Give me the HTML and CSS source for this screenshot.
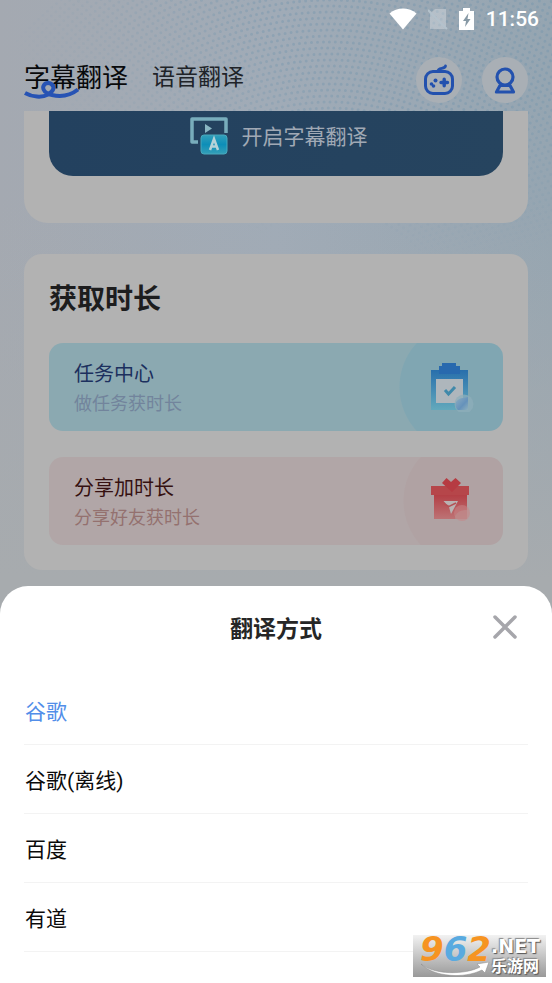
FILE: index.html
```html
<!DOCTYPE html>
<html lang="zh-CN">
<head>
<meta charset="utf-8">
<meta name="viewport" content="width=device-width, initial-scale=1">
<title>字幕翻译</title>
<link rel="stylesheet" href="styles.css">
</head>
<body>
<div class="app">
  <svg class="dots" width="552" height="260" viewBox="0 0 552 260" fill="none" stroke="#6e93ac" stroke-width="3" stroke-linecap="round" stroke-dasharray="0 6" aria-hidden="true"></svg>
  <div class="statusbar">
    <svg width="28" height="22" viewBox="0 0 28 22" aria-hidden="true"><path d="M0.500 5.500C8-1.300 20-1.300 27.500 5.500L14 21.500Z" fill="#fff"/></svg>
    <svg width="20" height="22" viewBox="0 0 20 22" aria-hidden="true"><path d="M7 1H18V21H2V6Z" fill="#fff" opacity=".28"/><path d="M0 2L19 21" stroke="#b4c2cc" stroke-width="2"/></svg>
    <svg width="16" height="24" viewBox="0 0 16 24" aria-hidden="true"><path d="M4 1H11V4H15V23H0V4H4Z" fill="#fff"/><path d="M9.500 6L4 14H7L6 20L11.500 12H8.500Z" fill="#8799a5"/></svg>
    <time>11:56</time>
  </div>
  <header class="header">
    <nav class="tabs">
      <a class="tab tab-active" href="#subtitle">字幕翻译
        <svg class="squiggle" width="56" height="20" viewBox="0 0 56 20" fill="none" aria-hidden="true"><path d="M1 13C8 17 18 18 24 14.500C28 12 30.500 9 29 6C27 2 21 2 19.500 6C18 10 22 14 28 15C37 17 47 15 54 9.500" stroke="#2753b4" stroke-width="4"/></svg>
      </a>
      <a class="tab" href="#voice">语音翻译</a>
    </nav>
    <div class="actions">
      <button class="round" aria-label="游戏">
        <svg width="34" height="34" viewBox="0 0 34 34" fill="none" stroke="#2351ae" stroke-width="3" stroke-linecap="round" aria-hidden="true"><rect x="3.500" y="8.500" width="27" height="22" rx="7.500"/><path d="M16 8C16 4 23 6.500 23.500 3" stroke-width="2.800"/><path d="M19 19.500H25.500M22.200 16.300V22.700" stroke-width="3.400"/><g fill="#2351ae" stroke="none"><circle cx="13.500" cy="17.500" r="2"/><circle cx="9.500" cy="21" r="1.800"/><circle cx="11.500" cy="23" r="1.800"/></g></svg>
      </button>
      <button class="round" aria-label="我的">
        <svg width="34" height="34" viewBox="0 0 34 34" fill="none" stroke="#2351ae" stroke-width="3.200" stroke-linejoin="round" aria-hidden="true"><circle cx="17" cy="14" r="8"/><path d="M12 22.500L8.500 29H25.500L22 22.500Z"/></svg>
      </button>
    </div>
  </header>
  <main class="content">
    <section class="card card-start">
      <button class="start">
        <svg width="40" height="40" viewBox="0 0 40 40" aria-hidden="true"><defs><linearGradient id="ga" x1="0" x2="0" y1="0" y2="1"><stop stop-color="#329fba"/><stop offset=".5" stop-color="#0d8eb8"/><stop offset="1" stop-color="#359fb7"/></linearGradient></defs><path d="M9 27H3V4H37V18" fill="none" stroke="#78adbc" stroke-width="3.500" stroke-linejoin="round"/><path d="M16 9L23 13.500L16 18Z" fill="#8ab6c3"/><rect x="12" y="20" width="26" height="19" rx="3" fill="url(#ga)" stroke="#48a8bd"/><path d="M21 35L25 24L29 35M22.500 31.500H27.500" fill="none" stroke="#b5d2d8" stroke-width="2.500"/></svg>
        <span>开启字幕翻译</span>
      </button>
    </section>
    <section class="card card-time">
      <h2>获取时长</h2>
      <a class="entry entry-task" href="#task">
        <span class="entry-text"><span class="entry-title">任务中心</span><span class="entry-sub">做任务获时长</span></span>
        <svg width="46" height="50" viewBox="0 0 46 50" aria-hidden="true"><defs><linearGradient id="gb" x1="0" x2="0" y1="0" y2="1"><stop stop-color="#286fac"/><stop offset="1" stop-color="#63a9bc"/></linearGradient><linearGradient id="gc" x1="0" y1="0" x2="1" y2="1"><stop stop-color="#8fadc1"/><stop offset=".6" stop-color="#6592bb"/><stop offset="1" stop-color="#8eb0bd"/></linearGradient></defs><path d="M3 8H40V48H3Z" fill="url(#gb)"/><path d="M11 4H14V1H28V4H32V12H11Z" fill="#2869ae"/><path d="M8 17H35V41H8Z" fill="#aeb6bc"/><path d="M17 28L20.500 32L27 25" fill="none" stroke="#4089aa" stroke-width="3"/><circle cx="36" cy="42" r="9.500" fill="#8eadba" opacity=".75"/><path d="M28 40Q31 36 35 36L40 35V48H30Q27 46 28 40" fill="url(#gc)"/></svg>
      </a>
      <a class="entry entry-share" href="#share">
        <span class="entry-text"><span class="entry-title">分享加时长</span><span class="entry-sub">分享好友获时长</span></span>
        <svg width="46" height="50" viewBox="0 0 46 50" aria-hidden="true"><defs><linearGradient id="gd" x1="0" x2="0" y1="0" y2="1"><stop stop-color="#b33d43"/><stop offset="1" stop-color="#bd7375"/></linearGradient></defs><path d="M6 18H39V43H6Z" fill="url(#gd)"/><path d="M3 10H41V19H3Z" fill="#b6464a"/><path d="M14 7L18.500 2L23 6L27.500 2L33 7L24 16Z" fill="#b63b42"/><path d="M15.500 25H30L23 38L21 31Z" fill="#b9b3b3"/><path d="M16 28L21 30.500L28 27" fill="none" stroke="#b55256" stroke-width="1.500"/><circle cx="34" cy="37" r="8" fill="#c98587" opacity=".55"/><path d="M27 40Q31 33 39 34V43H27Z" fill="#bd8e8e" opacity=".6"/></svg>
      </a>
    </section>
  </main>
  <section class="sheet" role="dialog" aria-labelledby="sheet-title">
    <div class="sheet-head">
      <h1 id="sheet-title">翻译方式</h1>
      <button class="close" aria-label="关闭"><svg width="26" height="26" viewBox="0 0 26 26" aria-hidden="true"><path d="M3 3L23 23M23 3L3 23" stroke="#a6a6ab" stroke-width="3.500" stroke-linecap="round"/></svg></button>
    </div>
    <ul class="options">
      <li><button class="option option-selected">谷歌</button></li>
      <li><button class="option">谷歌(离线)</button></li>
      <li><button class="option">百度</button></li>
      <li><button class="option">有道</button></li>
    </ul>
  </section>
  <div class="watermark">
    <span class="mark-num"><span class="orange">9</span><span class="blue">6</span><span class="orange">2</span></span>
    <span class="mark-side"><span class="mark-net">.NET</span><span class="mark-cn">乐游网</span></span>
    <svg class="swoosh" width="70" height="14" viewBox="0 0 70 14" aria-hidden="true"><path d="M1 2C14 13 45 13 60 5L57 2L69 0L65 11L62 8C44 17 14 15 1 2Z" fill="#fff" stroke="#888" stroke-width=".5"/></svg>
  </div>
</div>
<script src="dots.js"></script>
</body>
</html>
```
FILE: dots.js
```js
// Fills the header backdrop with concentric dotted rings.
const dots = document.querySelector('.dots');
for (let r = 120; r < 430; r += 6) {
  const ring = document.createElementNS('http://www.w3.org/2000/svg', 'circle');
  ring.setAttribute('cx', 330);
  ring.setAttribute('cy', 330);
  ring.setAttribute('r', r);
  dots.appendChild(ring);
}
```
FILE: styles.css
```css
* {
  box-sizing: border-box;
}

body {
  margin: 0;
  font-family: Roboto, "Noto Sans CJK SC", sans-serif;
}

button {
  border: 0;
  padding: 0;
  font: inherit;
  color: inherit;
  background: none;
}

a {
  color: inherit;
  text-decoration: none;
}

h1,
h2 {
  margin: 0;
}

.app {
  position: relative;
  display: flex;
  flex-direction: column;
  min-height: 100vh;
  background:
    linear-gradient(transparent 200px, #a7abae 580px),
    linear-gradient(90deg, #a4a9b1, #a0abb7 50%, #95a5b1);
}

.dots {
  position: absolute;
  top: 0;
  right: 0;
  opacity: 0.35;
  mask-image: radial-gradient(ellipse at 80% 0, #000 30%, transparent 70%);
}

.statusbar {
  position: relative;
  display: flex;
  justify-content: flex-end;
  align-items: center;
  gap: 11px;
  height: 38px;
  padding-right: 13px;
  color: #fff;
  font-size: 21px;
  font-weight: 500;
}

.header {
  position: relative;
  display: flex;
  justify-content: space-between;
  height: 73px;
  padding: 19px 24px 0;
}

.tabs {
  display: flex;
  align-items: center;
  gap: 24px;
  height: 42px;
}

.tab {
  position: relative;
  font-size: 23px;
  line-height: 40px;
  color: #202328;
}

.tab-active {
  font-size: 26px;
  color: #08090b;
}

.squiggle {
  position: absolute;
  left: 0;
  top: 22px;
}

.actions {
  display: flex;
  gap: 20px;
}

.round {
  display: grid;
  place-items: center;
  width: 46px;
  height: 46px;
  border-radius: 50%;
  background: #a9afb5;
}

.content {
  position: relative;
  display: flex;
  flex-direction: column;
  gap: 31px;
  padding: 0 24px;
}

.card {
  padding: 0 25px;
  background: #b2b2b2;
}

.card-start {
  padding-bottom: 47px;
  border-radius: 0 0 24px 24px;
}

.start {
  display: flex;
  justify-content: center;
  align-items: center;
  gap: 13px;
  width: 100%;
  height: 65px;
  padding-bottom: 18px;
  padding-left: 4px;
  border-radius: 0 0 24px 24px;
  background: linear-gradient(90deg, #23415f, #26445f);
  color: #a0a9b5;
  font-size: 21px;
}

.card-time {
  display: flex;
  flex-direction: column;
  gap: 24px;
  padding-top: 26px;
  padding-bottom: 25px;
  border-radius: 18px;
}

.card-time h2 {
  font-size: 28px;
  line-height: 39px;
  color: #1d1d1e;
}

.entry {
  display: flex;
  justify-content: space-between;
  align-items: center;
  height: 88px;
  padding: 0 29px 0 25px;
  border-radius: 14px;
}

.entry + .entry {
  margin-top: 2px;
}

.entry-task {
  background: radial-gradient(circle at 415px 44px, #80a6b2 64px, #8ba9b1 65px);
  color: #1c305e;
}

.entry-share {
  background: radial-gradient(circle at 419px 44px, #b0a2a3 64px, #b1a6a7 65px);
  color: #351010;
}

.entry-text {
  display: flex;
  flex-direction: column;
  padding-top: 3px;
}

.entry-title {
  font-size: 20px;
  line-height: 29px;
}

.entry-sub {
  font-size: 18px;
  line-height: 29px;
}

.entry-task .entry-sub {
  color: #72849c;
}

.entry-share .entry-sub {
  color: #94716f;
}

.sheet {
  position: relative;
  flex: 1;
  margin-top: 16px;
  padding: 0 24px;
  border-radius: 28px 28px 0 0;
  background: #fff;
}

.sheet-head {
  display: grid;
  grid-template-columns: 46px 1fr 46px;
  align-items: center;
  height: 90px;
  padding-bottom: 9px;
}

.sheet-head h1 {
  grid-column: 2;
  text-align: center;
  font-size: 23px;
  color: #262626;
}

.close {
  display: grid;
  place-items: center;
  height: 46px;
}

.options {
  margin: 0;
  padding: 0;
  list-style: none;
}

.options li {
  border-bottom: 1px solid #f3f3f3;
}

.option {
  display: block;
  width: 100%;
  height: 68px;
  padding-left: 1px;
  text-align: left;
  font-size: 21px;
  color: #0b0b0b;
}

.option-selected {
  color: #528ee9;
}

.watermark {
  position: absolute;
  right: 6px;
  bottom: 6px;
  display: flex;
  width: 133px;
  height: 42px;
  padding-left: 7px;
  background: linear-gradient(#f2f2f2, #999);
  font-weight: 700;
}

.mark-num {
  font: italic bold 34px/28px "DejaVu Sans", sans-serif;
}

.orange {
  color: #f69422;
}

.blue {
  color: #59aae0;
}

.mark-side {
  display: flex;
  flex-direction: column;
  color: #fff;
  text-shadow: 1px 1px 1px #555, -1px -1px 1px #888;
}

.mark-net {
  font: bold 19px/22px "DejaVu Sans", sans-serif;
}

.mark-cn {
  font-size: 16px;
  line-height: 20px;
}

.swoosh {
  position: absolute;
  left: 7px;
  bottom: 1px;
}
```
